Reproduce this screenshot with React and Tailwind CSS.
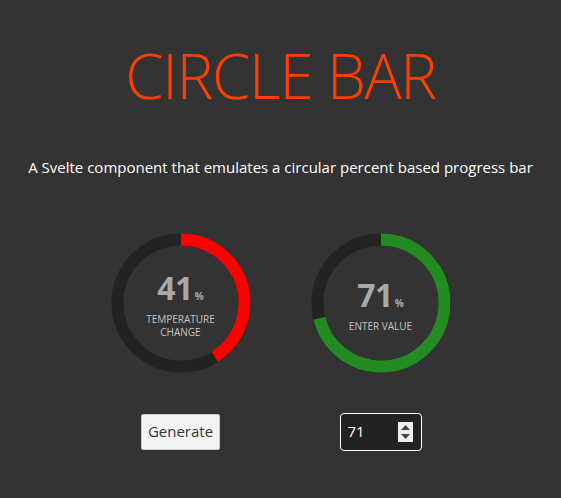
import React, { useState } from 'react';

const Ring = ({ value, color, label }) => {
    const r = 63.5;
    const c = 2 * Math.PI * r;
    return (
        <div className="relative w-[140px] h-[140px]">
            <svg width="140" height="140" viewBox="0 0 140 140" className="-rotate-90">
                <circle cx="70" cy="70" r={r} fill="none" stroke="#232323" strokeWidth="12" />
                <circle
                    cx="70"
                    cy="70"
                    r={r}
                    fill="none"
                    stroke={color}
                    strokeWidth="12"
                    strokeDasharray={`${(c * value) / 100} ${c}`}
                />
            </svg>
            <div className="absolute inset-0 flex flex-col items-center justify-center pt-[6px]">
                <div className="flex items-baseline text-[#a9a9a9] font-bold leading-none">
                    <span className="text-[32px] tracking-[-0.5px]">{value}</span>
                    <span className="text-[10px] ml-[2px]">%</span>
                </div>
                <div className="mt-[9px] text-[10px] leading-[13px] text-[#c4c4c4] text-center uppercase w-[80px]">
                    {label}
                </div>
            </div>
        </div>
    );
};

const Spinner = () => (
    <div className="w-[15px] h-[20px] bg-[#f0f0f0] flex flex-col items-center justify-center gap-[4px]">
        <svg width="9" height="5" viewBox="0 0 9 5">
            <path d="M4.5 0L9 5H0z" fill="#444" />
        </svg>
        <svg width="9" height="5" viewBox="0 0 9 5">
            <path d="M0 0H9L4.5 5z" fill="#444" />
        </svg>
    </div>
);

export default function App() {
    const [temp] = useState(41);
    const [val] = useState(71);

    return (
        <div className="min-h-screen bg-[#333333] flex flex-col items-center font-['Open_Sans',sans-serif]">
            <h1 className="mt-[37px] text-[62px] font-light leading-[76px] text-[#ff3e00] tracking-[-1.4px]">
                CIRCLE BAR
            </h1>
            <p className="mt-[43px] text-[15px] text-white">
                A Svelte component that emulates a circular percent based progress bar
            </p>
            <div className="mt-[54px] flex">
                <div className="w-[200px] flex flex-col items-center">
                    <Ring value={temp} color="#ff0000" label="Temperature change" />
                    <button className="mt-[41px] h-[36px] w-[79px] bg-[#f4f4f4] border border-[#c8c8c8] rounded-[2px] text-[15px] text-[#333]">
                        Generate
                    </button>
                </div>
                <div className="w-[200px] flex flex-col items-center">
                    <Ring value={val} color="#228b22" label="Enter value" />
                    <div className="mt-[40px] h-[38px] w-[82px] bg-[#222] border border-white rounded-[4px] flex items-center justify-between pl-[7px] pr-[8px]">
                        <span className="text-[15px] text-white">{val}</span>
                        <Spinner />
                    </div>
                </div>
            </div>
        </div>
    );
}
